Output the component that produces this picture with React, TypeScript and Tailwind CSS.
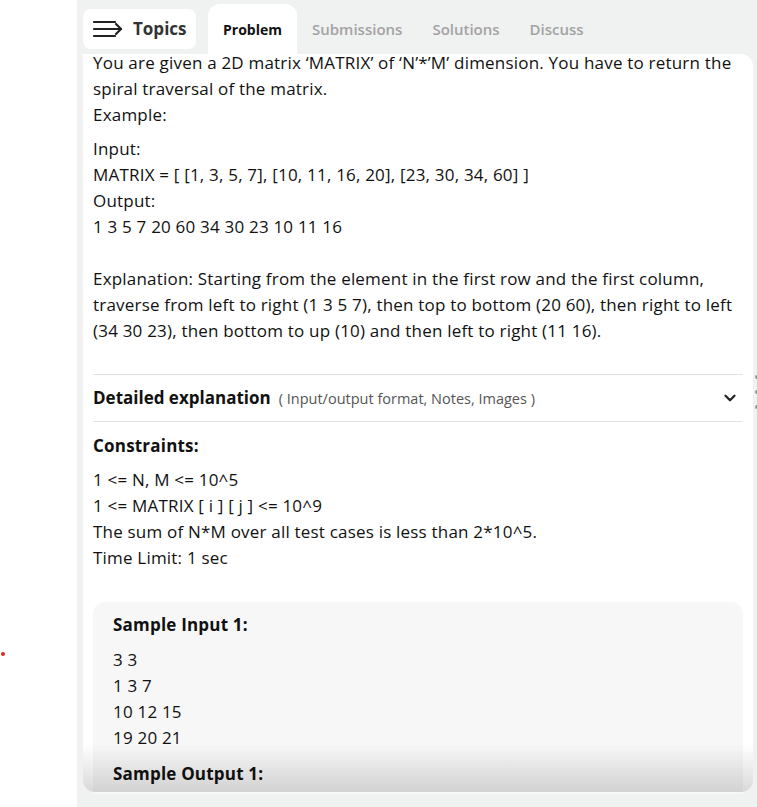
import React from 'react';
import { ChevronDown } from 'lucide-react';

const font = { fontFamily: '"Open Sans", "Noto Sans", sans-serif' };

const TopicsIcon = () => (
    <svg width="30" height="20" viewBox="0 0 30 20" fill="none" stroke="#222" strokeWidth="2.2" strokeLinecap="round">
        <line x1="1" y1="3" x2="22" y2="3" />
        <line x1="1" y1="10" x2="28" y2="10" />
        <line x1="1" y1="17" x2="22" y2="17" />
        <polyline points="23,5 28,10 23,15" strokeLinejoin="round" />
    </svg>
);

const App: React.FC = () => {
    return (
        <div className="flex h-[807px] w-[757px] overflow-hidden bg-white text-[#111]" style={font}>
            <div className="relative w-[77px] shrink-0">
                <span className="absolute left-[1px] top-[652px] h-[4px] w-[4px] rounded-full bg-[#e02424]"></span>
            </div>
            <div className="relative flex flex-1 flex-col bg-[#f0f1f1] pl-[6px] pr-[4px]">
                {/* header */}
                <div className="flex h-[54px] shrink-0 items-end">
                    <button className="mb-[5px] flex h-[40px] w-[113px] items-center gap-[10px] rounded-[8px] bg-white pl-[10px] text-[17px] font-bold text-[#333]">
                        <TopicsIcon />
                        <span>Topics</span>
                    </button>
                    <div className="ml-[12px] flex h-[50px] w-[89px] items-center justify-center rounded-t-[12px] bg-white text-[14px] font-bold text-[#111]">
                        Problem
                    </div>
                    <div className="flex h-[50px] items-center text-[15px] font-semibold text-[#a3a3a3]">
                        <span className="px-[15px]">Submissions</span>
                        <span className="px-[15px]">Solutions</span>
                        <span className="px-[15px]">Discuss</span>
                    </div>
                </div>

                {/* card */}
                <div className="relative h-[738px] rounded-b-[12px] rounded-tr-[12px] bg-white">
                    <div className="-mt-[4px] px-[10px] text-[17px] leading-[26px] tracking-[0.2px]">
                        <p>You are given a 2D matrix ‘MATRIX’ of ‘N’*’M’ dimension. You have to return the spiral traversal of the matrix.</p>
                        <p>Example:</p>
                        <p className="mt-[8px]">Input:</p>
                        <p>MATRIX = [ [1, 3, 5, 7], [10, 11, 16, 20], [23, 30, 34, 60] ]</p>
                        <p>Output:</p>
                        <p>1 3 5 7 20 60 34 30 23 10 11 16</p>
                        <p className="mt-[26px]">Explanation: Starting from the element in the first row and the first column, traverse from left to right (1 3 5 7), then top to bottom (20 60), then right to left (34 30 23), then bottom to up (10) and then left to right (11 16).</p>

                        <div className="mt-[30px] flex h-[48px] items-center justify-between border-y border-[#e2e2e2] tracking-normal">
                            <div className="flex items-baseline gap-[8px]">
                                <span className="text-[17px] font-bold">Detailed explanation</span>
                                <span className="text-[14.5px] text-[#555]">( Input/output format, Notes, Images )</span>
                            </div>
                            <ChevronDown size={18} strokeWidth={3} className="mr-[4px] text-[#222]" />
                        </div>

                        <p className="mt-[11px] font-bold">Constraints:</p>
                        <div className="mt-[8px]">
                            <p>1 &lt;= N, M &lt;= 10^5</p>
                            <p>1 &lt;= MATRIX [ i ] [ j ] &lt;= 10^9</p>
                            <p>The sum of N*M over all test cases is less than 2*10^5.</p>
                            <p>Time Limit: 1 sec</p>
                        </div>

                        <div className="mt-[31px] h-[192px] overflow-hidden rounded-t-[12px] bg-[#f7f7f7] px-[20px] pt-[10px]">
                            <p className="font-bold">Sample Input 1:</p>
                            <div className="mt-[9px]">
                                <p>3 3</p>
                                <p>1 3 7</p>
                                <p>10 12 15</p>
                                <p>19 20 21</p>
                            </div>
                            <p className="mt-[10px] font-bold">Sample Output 1:</p>
                        </div>
                    </div>
                    <div className="pointer-events-none absolute inset-x-0 bottom-0 h-[48px] rounded-b-[12px] bg-gradient-to-b from-black/0 to-black/15"></div>
                </div>

                <div className="absolute right-0 top-[375px] flex flex-col gap-[11px]">
                    <span className="h-[4px] w-[2px] rounded-l bg-[#999]"></span>
                    <span className="h-[4px] w-[2px] rounded-l bg-[#999]"></span>
                    <span className="h-[4px] w-[2px] rounded-l bg-[#999]"></span>
                </div>
            </div>
        </div>
    );
};

export default App;
